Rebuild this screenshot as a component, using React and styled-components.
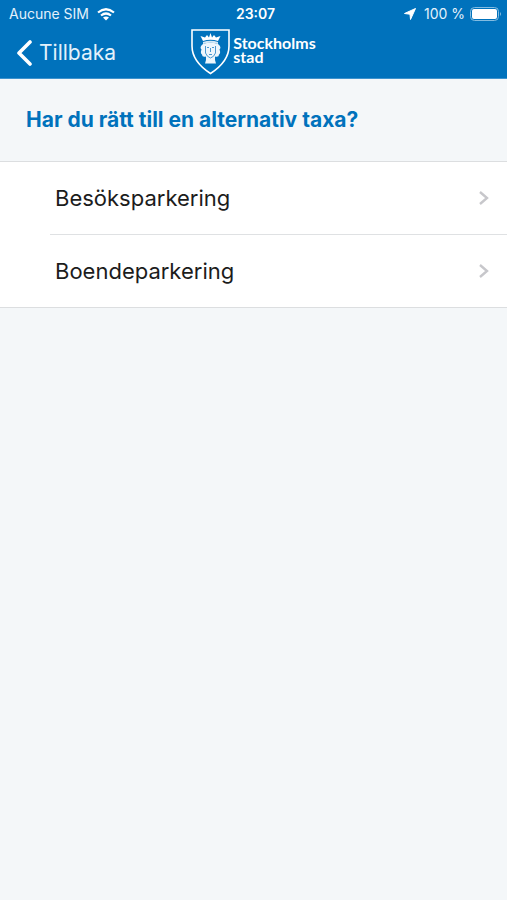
import React from "react";
import styled, { createGlobalStyle } from "styled-components";

const GlobalStyle = createGlobalStyle`
  * { box-sizing: border-box; }
  body {
    margin: 0;
    background: #f4f7f9;
    font-family: Inter, "Open Sans", sans-serif;
  }
`;

const Screen = styled.div`
  min-height: 100vh;
  background: #f4f7f9;
`;

const Header = styled.header`
  background: #0072bc;
  color: #fff;
`;

const StatusBar = styled.div`
  display: grid;
  grid-template-columns: 1fr auto 1fr;
  align-items: center;
  height: 28px;
  padding: 0 5px 0 9px;
  font-size: 14px;
  line-height: 20px;
`;

const StatusGroup = styled.div`
  display: flex;
  align-items: center;
  justify-content: ${({ $end }) => ($end ? "flex-end" : "flex-start")};
  gap: ${({ $end }) => ($end ? "5px" : "8px")};
  color: #e3f1fb;
`;

const Clock = styled.time`
  font-weight: 600;
  font-size: 14px;
`;

const LocationIcon = styled.svg`
  margin-right: 3px;
`;

const NavBar = styled.nav`
  display: grid;
  grid-template-columns: 1fr auto 1fr;
  align-items: center;
  height: 51px;
  padding: 0 16px;
  border-bottom: 1px solid #3d93ce;
`;

const BackButton = styled.button`
  display: flex;
  align-items: center;
  justify-self: start;
  gap: 7px;
  padding: 0;
  border: 0;
  background: none;
  color: #e3f1fb;
  font: inherit;
  font-size: 21px;
  line-height: 28px;
  cursor: pointer;
`;

const Brand = styled.div`
  display: flex;
  align-items: flex-start;
  gap: 3px;
  height: 48px;
`;

const BrandName = styled.span`
  display: flex;
  flex-direction: column;
  padding-top: 7px;
  font-family: Lato, sans-serif;
  font-size: 16px;
  font-weight: 700;
  line-height: 14px;
`;

const Title = styled.h1`
  margin: 0;
  padding: 26px;
  color: #0072bc;
  font-size: 21px;
  font-weight: 700;
  line-height: 30px;
`;

const List = styled.ul`
  margin: 0;
  padding: 0 0 0 50px;
  list-style: none;
  background: #fff;
  border-top: 1px solid #dcdee0;
  border-bottom: 1px solid #dcdee0;
`;

const Item = styled.li`
  & + & { border-top: 1px solid #dfe1e3; }
`;

const RowButton = styled.button`
  display: flex;
  align-items: center;
  justify-content: space-between;
  width: 100%;
  height: 72px;
  padding: 0 17px 0 5px;
  border: 0;
  background: none;
  color: #1c1c1c;
  font: inherit;
  font-size: 22px;
  line-height: 28px;
  text-align: left;
  cursor: pointer;
`;

const Crest = () => (
  <svg width="39" height="46" viewBox="0 0 39 46" fill="none" aria-hidden="true">
    <path d="M1 1H38V17C38 29 31 37 19.500 44.500C8 37 1 29 1 17Z" stroke="#fff" strokeWidth="1.600" />
    <path d="M12 12L9.500 7L14 8.500L16 6L18 8.500L19.500 4L21 8.500L23 6L25 8.500L29.500 7L27 12Q19.500 9.500 12 12Z" fill="#fff" />
    <path d="M12 13Q19.500 10.500 27 13V15Q19.500 12.500 12 15Z" fill="#d3e8f6" />
    <path d="M12 15Q8 18 10.500 20.500Q9 24 11 25.500Q11 28.500 15 27.500V31L14 34.500H25L24 31V27.500Q28 28.500 28 25.500Q30 24 28.500 20.500Q31 18 27 15Q19.500 12.500 12 15Z" fill="#edf6fc" />
    <path d="M14.500 17V24Q16 28 19.500 29Q23 28 24.500 24V17M16 18.500H18M21 18.500H23M19.500 19V23M18 25.500H21" stroke="#4a99d0" />
  </svg>
);

const Chevron = () => (
  <svg width="12" height="16" viewBox="0 0 12 16" fill="none" aria-hidden="true">
    <path d="M2 2L9 8L2 14" stroke="#c7c7cb" strokeWidth="2.400" />
  </svg>
);

const OPTIONS = ["Besöksparkering", "Boendeparkering"];

export default function App() {
  return (
    <Screen>
      <GlobalStyle />
      <Header>
        <StatusBar>
          <StatusGroup>
            <span>Aucune SIM</span>
            <svg width="18" height="13" viewBox="0 0 18 13" fill="none" aria-label="Wi-Fi">
              <path d="M1 4.500Q9 -2 17 4.500M4 7.500Q9 3.500 14 7.500" stroke="#fff" strokeWidth="2.200" />
              <path d="M6 9.500Q9 7.500 12 9.500L9 12.500Z" fill="#fff" />
            </svg>
          </StatusGroup>
          <Clock>23:07</Clock>
          <StatusGroup $end>
            <LocationIcon width="12" height="12" viewBox="0 0 12 12" aria-hidden="true">
              <path d="M11.500 0.500L0.500 5.500L6 6.200L6.500 11.500Z" fill="#fff" stroke="#fff" strokeLinejoin="round" />
            </LocationIcon>
            <span>100 %</span>
            <svg width="32" height="14" viewBox="0 0 32 14" fill="none" aria-label="Batteri">
              <rect x="0.500" y="0.500" width="28" height="13" rx="4" stroke="#83bce1" />
              <rect x="2" y="2" width="25" height="10" rx="2" fill="#fff" />
              <path d="M30 5Q32 7 30 9Z" fill="#83bce1" />
            </svg>
          </StatusGroup>
        </StatusBar>
        <NavBar>
          <BackButton type="button">
            <svg width="16" height="26" viewBox="0 0 16 26" fill="none" aria-hidden="true">
              <path d="M14 2L3 13L14 24" stroke="#fff" strokeWidth="3.600" strokeLinecap="round" strokeLinejoin="round" />
            </svg>
            Tillbaka
          </BackButton>
          <Brand>
            <Crest />
            <BrandName>
              <span>Stockholms</span>
              <span>stad</span>
            </BrandName>
          </Brand>
        </NavBar>
      </Header>
      <main>
        <Title>Har du rätt till en alternativ taxa?</Title>
        <List>
          {OPTIONS.map((label) => (
            <Item key={label}>
              <RowButton type="button">
                {label}
                <Chevron />
              </RowButton>
            </Item>
          ))}
        </List>
      </main>
    </Screen>
  );
}
